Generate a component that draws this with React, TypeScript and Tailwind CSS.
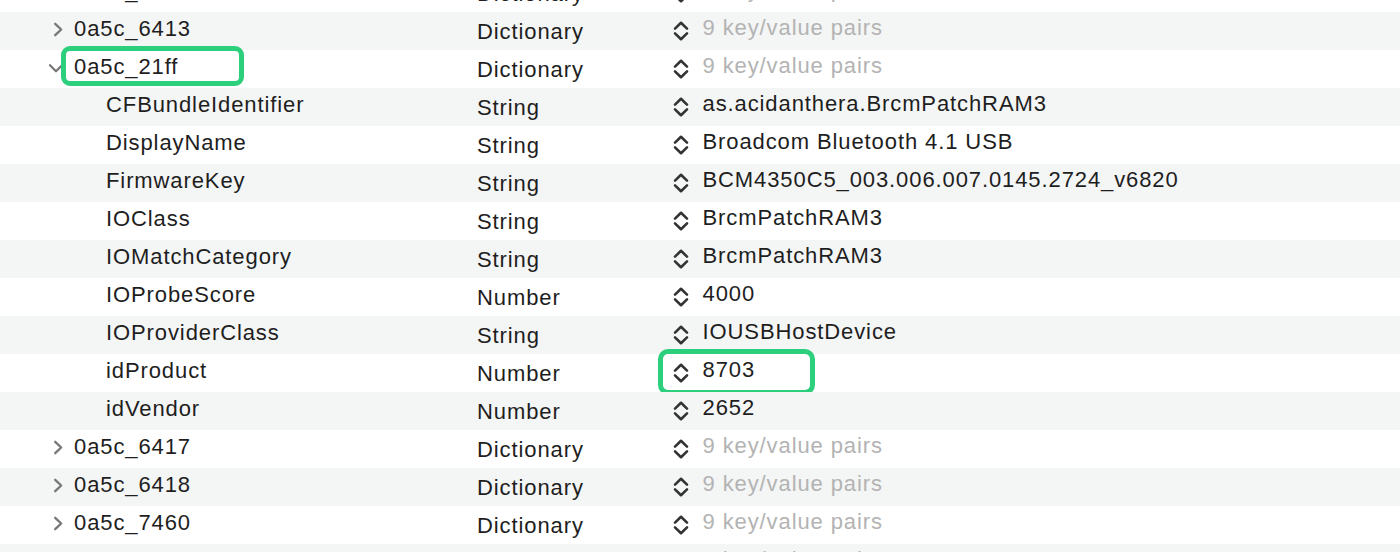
import React from "react";

type Row = {
  key: string;
  level: 1 | 2;
  type: string;
  value: string;
  expanded?: boolean;
  placeholder?: boolean;
  boxKey?: boolean;
  boxValue?: boolean;
};

const rows: Row[] = [
  { key: "0a5c_6412", level: 1, type: "Dictionary", value: "9 key/value pairs", placeholder: true },
  { key: "0a5c_6413", level: 1, type: "Dictionary", value: "9 key/value pairs", placeholder: true },
  { key: "0a5c_21ff", level: 1, type: "Dictionary", value: "9 key/value pairs", placeholder: true, expanded: true, boxKey: true },
  { key: "CFBundleIdentifier", level: 2, type: "String", value: "as.acidanthera.BrcmPatchRAM3" },
  { key: "DisplayName", level: 2, type: "String", value: "Broadcom Bluetooth 4.1 USB" },
  { key: "FirmwareKey", level: 2, type: "String", value: "BCM4350C5_003.006.007.0145.2724_v6820" },
  { key: "IOClass", level: 2, type: "String", value: "BrcmPatchRAM3" },
  { key: "IOMatchCategory", level: 2, type: "String", value: "BrcmPatchRAM3" },
  { key: "IOProbeScore", level: 2, type: "Number", value: "4000" },
  { key: "IOProviderClass", level: 2, type: "String", value: "IOUSBHostDevice" },
  { key: "idProduct", level: 2, type: "Number", value: "8703", boxValue: true },
  { key: "idVendor", level: 2, type: "Number", value: "2652" },
  { key: "0a5c_6417", level: 1, type: "Dictionary", value: "9 key/value pairs", placeholder: true },
  { key: "0a5c_6418", level: 1, type: "Dictionary", value: "9 key/value pairs", placeholder: true },
  { key: "0a5c_7460", level: 1, type: "Dictionary", value: "9 key/value pairs", placeholder: true },
  { key: "0b05_17b5", level: 1, type: "Dictionary", value: "9 key/value pairs", placeholder: true },
];

function Stepper() {
  return (
    <svg width="16" height="22" viewBox="0 0 16 22" className="shrink-0 mt-[8px] -ml-[0.5px]">
      <path d="M2 8.6 L8 2.8 L14 8.6" fill="none" stroke="#333333" strokeWidth="2.6" strokeLinecap="round" strokeLinejoin="round" />
      <path d="M2 13.4 L8 19.2 L14 13.4" fill="none" stroke="#333333" strokeWidth="2.6" strokeLinecap="round" strokeLinejoin="round" />
    </svg>
  );
}

function ChevronRight() {
  return (
    <svg width="11" height="15" viewBox="0 0 11 15" className="ml-[4.5px] mt-[9.5px]">
      <path d="M2.2 1.8 L8.2 7.5 L2.2 13.2" fill="none" stroke="#777777" strokeWidth="2.3" strokeLinecap="round" strokeLinejoin="round" />
    </svg>
  );
}

function ChevronDown() {
  return (
    <svg width="16" height="11" viewBox="0 0 16 11" className="mt-[12.5px] -ml-[0.5px]">
      <path d="M2 2.2 L8 8.2 L14 2.2" fill="none" stroke="#777777" strokeWidth="2.3" strokeLinecap="round" strokeLinejoin="round" />
    </svg>
  );
}

export default function App() {
  return (
    <div
      className="w-[1400px] h-[552px] overflow-hidden bg-white text-[22px] tracking-[0.9px] text-[#1e1e1e]"
      style={{ fontFamily: '"Liberation Sans", Arial, Helvetica, sans-serif' }}
    >
      <div className="flex flex-col -mt-[26px]">
        {rows.map((r, i) => (
          <div
            key={r.key}
            className={`relative flex h-[38px] shrink-0 ${i % 2 === 1 ? "bg-[#f4f5f5]" : "bg-white"}`}
          >
            <div className={`flex w-[477px] shrink-0 ${r.level === 1 ? "pl-[48px]" : "pl-[106px]"}`}>
              {r.level === 1 && (
                <div className="w-[26px] shrink-0">
                  {r.expanded ? <ChevronDown /> : <ChevronRight />}
                </div>
              )}
              <span className="leading-[33px] whitespace-nowrap">{r.key}</span>
            </div>
            <div className="w-[196px] shrink-0 leading-[39px] whitespace-nowrap">{r.type}</div>
            <Stepper />
            <span
              className={`ml-[14px] leading-[32px] whitespace-nowrap ${r.placeholder ? "text-[#b3b3b3]" : "text-[#1e1e1e]"}`}
            >
              {r.value}
            </span>
            {r.boxKey && (
              <div className="absolute left-[61px] top-[-4px] w-[183px] h-[40px] border-[5px] border-[#2ccf7b] rounded-[9px]" />
            )}
            {r.boxValue && (
              <div className="absolute left-[658px] top-[-5px] w-[157px] h-[46px] border-[5px] border-[#2ccf7b] rounded-[10px]" />
            )}
          </div>
        ))}
      </div>
    </div>
  );
}
